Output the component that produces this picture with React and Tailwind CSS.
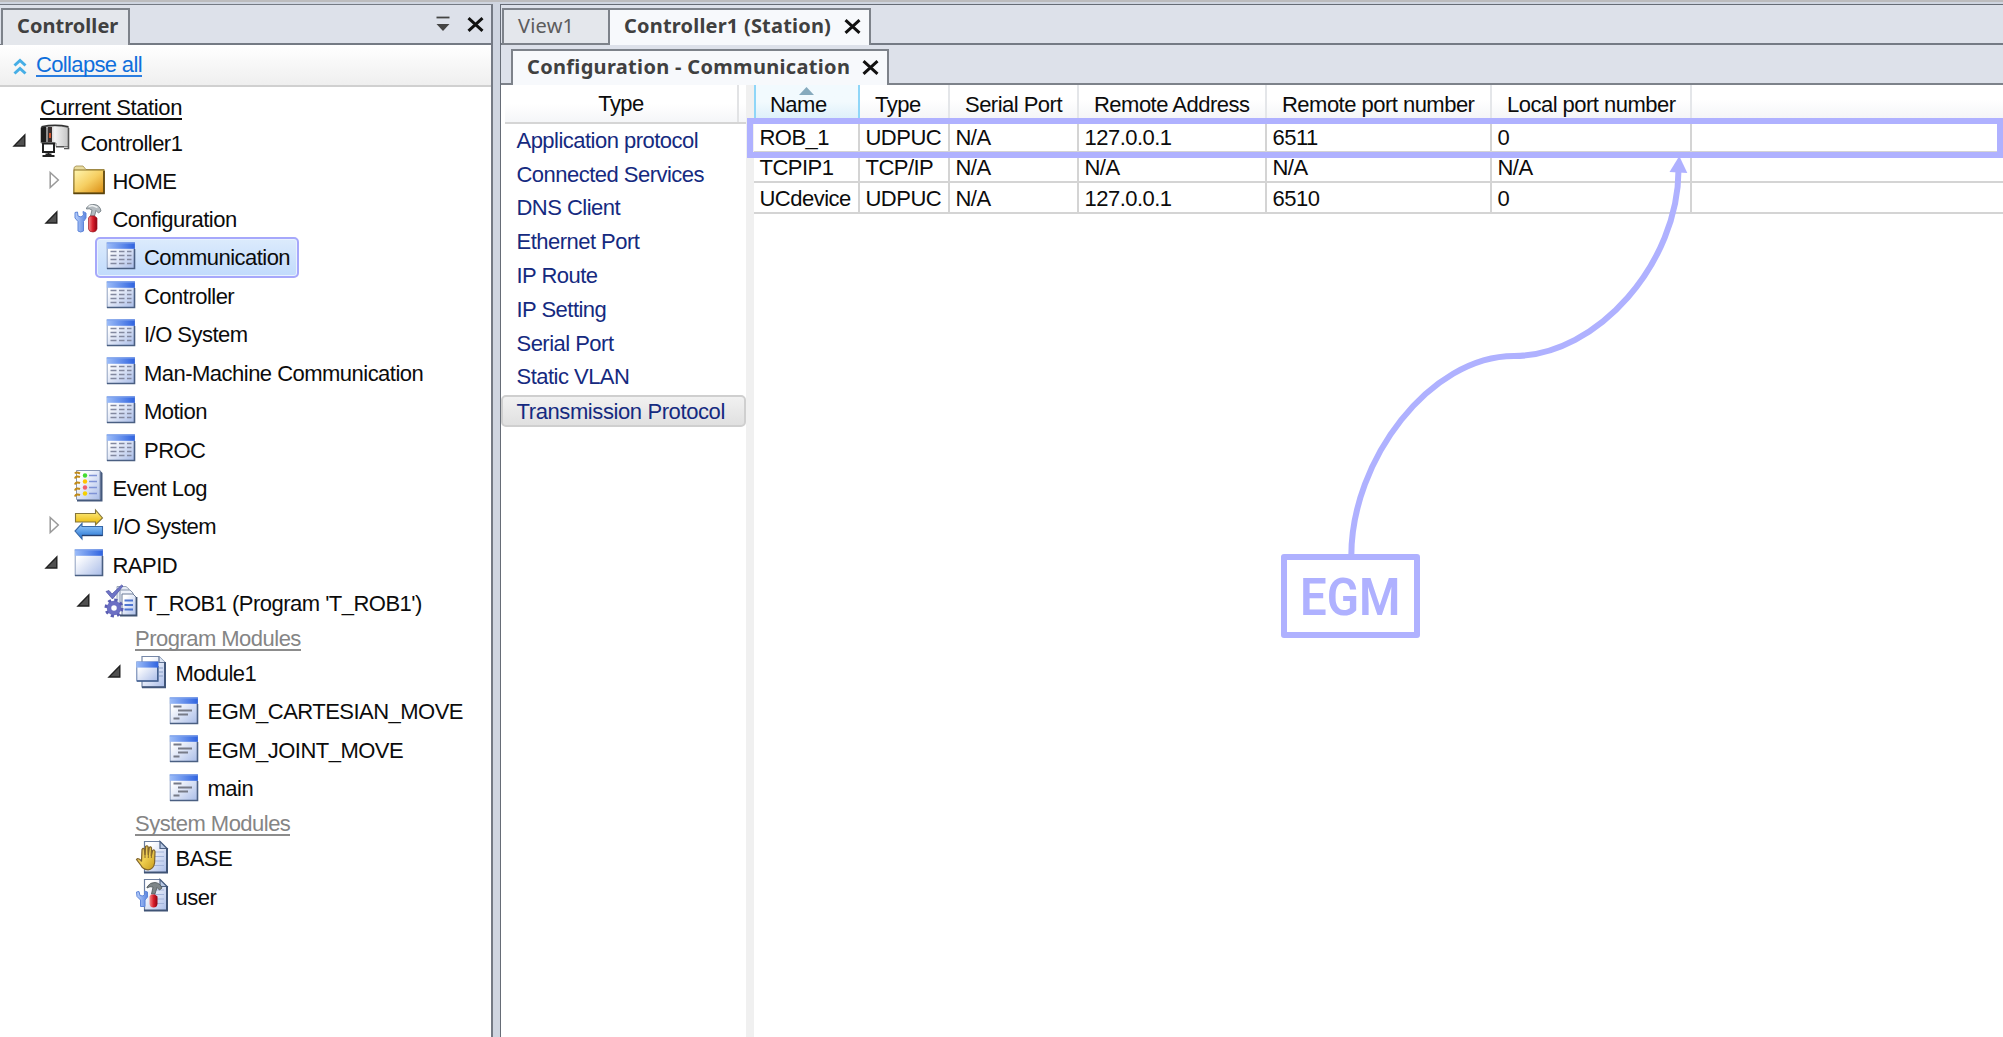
import React from "react";

const Svg = ({ children }) => (
  <svg width="32" height="32" viewBox="0 0 32 32" className="shrink-0 overflow-visible">
    {children}
  </svg>
);

const Defs = () => (
  <svg width="0" height="0" className="absolute">
    <defs>
      <linearGradient id="bar" x1="0" x2="1"><stop offset="0" stopColor="#9dbdf8" /><stop offset="1" stopColor="#2f63e0" /></linearGradient>
      <linearGradient id="pane" x1="0" y1="0" x2="1" y2="1"><stop offset="0.2" stopColor="#ffffff" /><stop offset="1" stopColor="#a9bce8" /></linearGradient>
      <linearGradient id="folder" x1="0" y1="0" x2="1" y2="1"><stop offset="0" stopColor="#fff6b0" /><stop offset="0.5" stopColor="#f6cf62" /><stop offset="1" stopColor="#d98a10" /></linearGradient>
      <linearGradient id="steel" x1="0" x2="1"><stop offset="0" stopColor="#777" /><stop offset="0.5" stopColor="#f4f4f4" /><stop offset="1" stopColor="#c4c4c4" /></linearGradient>
      <linearGradient id="gold" x1="0" y1="0" x2="0" y2="1"><stop offset="0" stopColor="#fff08a" /><stop offset="1" stopColor="#e8b400" /></linearGradient>
      <linearGradient id="hand" x1="0" y1="0" x2="1" y2="1"><stop offset="0" stopColor="#d9b96a" /><stop offset="0.5" stopColor="#f0cf50" /><stop offset="1" stopColor="#c79a18" /></linearGradient>
      <linearGradient id="azure" x1="0" y1="0" x2="0" y2="1"><stop offset="0" stopColor="#9fd0ff" /><stop offset="1" stopColor="#1f6fd0" /></linearGradient>
      <linearGradient id="red" x1="0" x2="1"><stop offset="0" stopColor="#f58a8a" /><stop offset="0.5" stopColor="#d8202c" /><stop offset="1" stopColor="#900010" /></linearGradient>
      <linearGradient id="wrench" x1="0" x2="1"><stop offset="0" stopColor="#b9d0fb" /><stop offset="1" stopColor="#5c86e0" /></linearGradient>
    </defs>
  </svg>
);

const Frame = () => (
  <>
    <rect x="3.2" y="1" width="27.3" height="25.5" fill="url(#pane)" stroke="#8fa0bf" />
    <path d="M30.5 7V26.5H3" fill="none" stroke="#4a5f82" strokeWidth="1.6" />
    <rect x="2.8" y="0.4" width="28" height="6.4" fill="url(#bar)" />
    <path d="M2.8 1H30.8" stroke="#7fa2ee" />
  </>
);

const TableIcon = () => (
  <Svg>
    <Frame />
    {[9.5, 13.5, 17.5, 21.5].map((y) => (
      <path key={y} d={`M6.5 ${y}h6M15 ${y}h5.5M23 ${y}h4.5`} stroke="#8389a0" strokeWidth="1.5" />
    ))}
  </Svg>
);
const WindowIcon = () => (<Svg><Frame /></Svg>);
const RoutineIcon = () => (
  <Svg>
    <g transform="translate(0 1)">
      <Frame />
      <path d="M6.5 9.500h8M11 13.500h14M11 17.500h10M6.500 21.500h6" stroke="#777b88" strokeWidth="1.900" />
    </g>
  </Svg>
);
const ControllerIcon = () => (
  <Svg>
    <path d="M1 0.500Q15-3 28.500 0.500V19.500H16V16H1Z" fill="url(#steel)" stroke="#666" strokeWidth="0.800" />
    <path d="M1 0.500L6 -0.500V15H1Z" fill="#1c1c1c" />
    <path d="M7 1V15" stroke="#909090" strokeWidth="2" />
    <path d="M10 0V15" stroke="#3a3030" strokeWidth="4" />
    <path d="M10 6v5" stroke="#e0582c" strokeWidth="1.800" />
    <path d="M1.500 -0.300Q15-3.200 28.500 -0.300" stroke="#333" strokeWidth="1.600" fill="none" />
    <path d="M16 19.800H24M24 21.500H28.500V1" stroke="#555" strokeWidth="1.600" fill="none" />
    <rect x="3" y="16.500" width="11" height="8.500" fill="#fff" stroke="#222" strokeWidth="2" />
    <path d="M8.500 25v3M2.500 29H14.500M5.500 27.500h6" stroke="#222" strokeWidth="1.800" />
  </Svg>
);
const FolderIcon = () => (
  <Svg>
    <path d="M2 4V1.500L4 0H11L14 3.500H32V27.500H1.500Z" fill="#e9dca0" stroke="#a08a4a" strokeWidth="0.800" />
    <rect x="2" y="4" width="30" height="23.200" fill="url(#folder)" stroke="#8d7426" />
    <path d="M32 5V27.400H1.500" fill="none" stroke="#5a430c" strokeWidth="1.600" />
  </Svg>
);
const ToolsIcon = () => (
  <Svg>
    <path d="M14.500 4Q17 0 22 0.500Q28 1 29 7L26.500 9L24 6.500L22.500 12H18.500L20 6Q17 4 14.500 5Z" fill="#b4bbc0" stroke="#768086" strokeWidth="0.900" />
    <path d="M16.500 2.500l4-1 5 2" stroke="#eef1f2" strokeWidth="1.400" fill="none" />
    <path d="M3 8.500L5.500 8L6 12L9 13L11.500 11L11 7.500L14 9V14L11.500 17.500V27Q8.500 29 6 27V17.500L3 14Z" fill="url(#wrench)" stroke="#5f86da" />
    <path d="M18 12H22.500L25 14V25Q24 28 21 28Q17 28 16.500 25V14Z" fill="url(#red)" stroke="#9b1822" strokeWidth="0.700" />
  </Svg>
);
const LogIcon = () => (
  <Svg>
    <path d="M5 -1.500H28L30.500 1V29.500H5Z" fill="#44597c" />
    <path d="M4.500 -1.500H28V27.500H4.500Z" fill="url(#pane)" stroke="#8796b4" />
    {[[3.5, "#42dc30"], [9.5, "#ffc400"], [15.5, "#f0606c"], [21.5, "#f5d000"]].map(([y, c]) => (
      <g key={y}>
        <circle cx="13" cy={y} r="2.200" fill={c} />
        <path d={`M17 ${y}h8`} stroke="#7f93d6" strokeWidth="1.500" />
        <path d={`M3 ${y + 3}q1-3 5-1.500`} stroke="#c08a18" strokeWidth="2.200" fill="none" />
      </g>
    ))}
    <path d="M3 1.500q1-2 5 0" stroke="#c08a18" strokeWidth="2" fill="none" />
  </Svg>
);
const SwapIcon = () => (
  <Svg>
    <path d="M3.500 2.500H23.500V-1L30.500 7L23.500 14V11H3.500Z" fill="url(#gold)" stroke="#85763a" strokeWidth="1.100" />
    <path d="M30.500 15.500H10V12.500L3 20L10 28V24.500H30.500Z" fill="url(#azure)" stroke="#3768a8" strokeWidth="1.100" />
    <path d="M10 24.500H30.500" stroke="#243f70" strokeWidth="1.400" />
  </Svg>
);
const ProgramIcon = () => (
  <Svg>
    <path d="M13 -0.500H22L25 2V18H13Z" fill="#e6ebf5" stroke="#9aa6ba" />
    <path d="M16 3H26L29 6V22H16Z" fill="#eef2fa" stroke="#8694ac" />
    <path d="M18 7H29L32.500 10.500V28.500H18Z" fill="url(#pane)" stroke="#6c7c98" />
    <path d="M32.500 10V28.500H16" fill="none" stroke="#3f5270" strokeWidth="1.800" />
    <path d="M20.500 13.500h8.500M20.500 18h8.500M20.500 22.500h8.500" stroke="#4d74d0" strokeWidth="2" />
    <path d="M2 4.500L5 3.500L8 7L17.500 -2L19 -1L8.500 12Z" fill="#6e74c6" stroke="#4c50a4" strokeWidth="0.700" />
    <circle cx="10" cy="21" r="5" fill="#fff" stroke="#6c6fc4" strokeWidth="4.500" />
    <circle cx="10" cy="21" r="8.100" fill="none" stroke="#5a5db2" strokeWidth="2.800" strokeDasharray="3.180 3.180" />
  </Svg>
);
const ModuleIcon = () => (
  <Svg>
    <path d="M7 -1.500H24L30 4.500V29H7Z" fill="url(#pane)" stroke="#7688a8" strokeWidth="1.200" />
    <path d="M24 -1.500V4.500H30" fill="#dfe7f6" stroke="#5f7294" strokeWidth="1.200" />
    <path d="M30 4V29.300H7" stroke="#41567a" strokeWidth="2" fill="none" />
    <path d="M24 10h4M24 14h4M24 18h4" stroke="#8ba0c8" />
    <rect x="1.800" y="4" width="21" height="19" fill="url(#pane)" stroke="#6079aa" />
    <path d="M22.800 8V23H2" fill="none" stroke="#43608f" strokeWidth="1.600" />
    <rect x="1.300" y="3.600" width="22" height="6" fill="url(#bar)" />
  </Svg>
);
const Page = () => (
  <>
    <path d="M9.500 -1.500H25L32 5.500V29.500H9.500Z" fill="url(#pane)" stroke="#6c7e9e" strokeWidth="1.200" />
    <path d="M25 -1.500V5.500H32Z" fill="#b8c8e4" stroke="#4f6384" strokeWidth="1.200" />
    <path d="M32 5V29.500H9" stroke="#3f5375" strokeWidth="2" fill="none" />
    <path d="M19 9h10M19 13.500h10M19 18h10M19 22.500h10" stroke="#a3b4da" strokeWidth="1.200" />
  </>
);
const HandIcon = () => (
  <Svg>
    <Page />
    <path
      d="M1.500 16.500Q3 14.500 6 17.500L6.500 18.500L7 6.500Q8 4.500 9.300 6L10 12L10.600 3.500Q12 2 13 3.500L13.300 12L14.300 4.500Q15.800 3 16.500 5L16.300 13L17.600 7.500Q19.500 6 20 8.500L19.600 20Q18.500 26.500 13 26.800Q8 26.500 6 22.500Z"
      fill="url(#hand)" stroke="#80642a" strokeWidth="1.200"
    />
    <path d="M10 7v8M13.300 6v9M16.400 8v7" stroke="#8a6c2c" strokeWidth="1" />
  </Svg>
);
const UserIcon = () => (
  <Svg>
    <Page />
    <path d="M12 6Q15 1 20 1.500Q25 2 27 7L24.500 9L22 6.500L20 13H16.500L18 6Q15 5 12 7Z" fill="#7d8588" stroke="#4c5558" strokeWidth="0.800" />
    <path d="M1.500 11L4 10.500L5 14.500L8 15L10 13L9.500 10L12.500 11V16L10 19V25.500H5.500V19L2 15.500Z" fill="url(#wrench)" stroke="#5f86da" />
    <path d="M16 13.500H20L22.500 15.500V23Q22 26.500 18.500 26.500Q15 26.500 14.500 23V15.500Z" fill="url(#red)" />
  </Svg>
);

const Arrow = ({ state }) => (
  <span className="flex h-8 w-[30px] shrink-0">
    {state === "open" && <Svg><path d="M14.800 8V19H4Z" fill="#505050" stroke="#222" strokeWidth="1.400" /></Svg>}
    {state === "closed" && <Svg><path d="M8.200 6.500L16.300 14L8.200 21.500Z" fill="#fff" stroke="#9a9a9a" strokeWidth="1.500" /></Svg>}
  </span>
);

const PAD = ["pl-[10px]", "pl-[42px]", "pl-[73.500px]", "pl-[105px]", "pl-[137px]"];
const TREE = [
  [0, "open", ControllerIcon, "Controller1"],
  [1, "closed", FolderIcon, "HOME"],
  [1, "open", ToolsIcon, "Configuration"],
  [2, "", TableIcon, "Communication", true],
  [2, "", TableIcon, "Controller"],
  [2, "", TableIcon, "I/O System"],
  [2, "", TableIcon, "Man-Machine Communication"],
  [2, "", TableIcon, "Motion"],
  [2, "", TableIcon, "PROC"],
  [1, "", LogIcon, "Event Log"],
  [1, "closed", SwapIcon, "I/O System"],
  [1, "open", WindowIcon, "RAPID"],
  [2, "open", ProgramIcon, "T_ROB1 (Program 'T_ROB1')"],
  "Program Modules",
  [3, "open", ModuleIcon, "Module1"],
  [4, "", RoutineIcon, "EGM_CARTESIAN_MOVE"],
  [4, "", RoutineIcon, "EGM_JOINT_MOVE"],
  [4, "", RoutineIcon, "main"],
  "System Modules",
  [3, "", HandIcon, "BASE"],
  [3, "", UserIcon, "user"],
];

const TreeRow = ({ row }) => {
  if (typeof row === "string")
    return (
      <div className="flex h-[31.700px] items-center pl-[135px] pt-[2px] text-[#858585]">
        <span className="border-b-2 border-[#8c8c8c] leading-[20px]">{row}</span>
      </div>
    );
  const [level, state, Icon, label, selected] = row;
  return (
    <div className={`flex h-[38.360px] items-center ${PAD[level]}`}>
      <Arrow state={state} />
      {selected ? (
        <div className="-ml-[9px] -mt-[2px] flex h-[41px] w-[204px] shrink-0 items-center rounded-[5px] border-2 border-[#a6a8fb] bg-gradient-to-b from-[#dcebfc] to-[#c1dbfc] pl-[7px] pt-[2px] ring-1 ring-inset ring-[#e8f2fe]">
          <Icon />
          <span className="pl-[8.500px]">{label}</span>
        </div>
      ) : (
        <>
          <Icon />
          <span className="pl-[8.500px] pt-px">{label}</span>
        </>
      )}
    </div>
  );
};

const Close = () => (
  <svg width="17" height="15" viewBox="0 0 17 15" className="mt-px shrink-0">
    <path d="M1.500 1.200L15.500 13.800M15.500 1.200L1.500 13.800" stroke="#111" strokeWidth="3" />
  </svg>
);

const TYPES = ["Application protocol", "Connected Services", "DNS Client", "Ethernet Port", "IP Route", "IP Setting", "Serial Port", "Static VLAN", "Transmission Protocol"];
const COLS = "grid grid-cols-[106px_90px_129px_188px_225px_200px_1fr]";
const HEAD = ["Name", "Type", "Serial Port", "Remote Address", "Remote port number", "Local port number", ""];
const ROWS = [
  ["ROB_1", "UDPUC", "N/A", "127.0.0.1", "6511", "0", ""],
  ["TCPIP1", "TCP/IP", "N/A", "N/A", "N/A", "N/A", ""],
  ["UCdevice", "UDPUC", "N/A", "127.0.0.1", "6510", "0", ""],
];

const ControllerPanel = () => (
  <aside className="flex w-[493px] shrink-0 flex-col border-r-2 border-[#747a84] bg-white">
    <div className="flex h-[40px] shrink-0 items-end bg-[#dde1ea]">
      <div className="h-full w-[1px] border-b border-[#747a84]" />
      <div className="mt-[3px] flex h-[37px] w-[129px] items-center border-x-2 border-t-2 border-[#7d828a] bg-[#e4e7ec] pb-[3px] pl-[14px] font-['Noto_Sans'] text-[20px] font-bold tracking-[0.050px] text-[#404040]">
        Controller
      </div>
      <div className="flex h-full flex-1 items-center justify-end gap-[17px] border-b-2 border-[#747a84] pr-[7px]">
        <svg width="14" height="16" viewBox="0 0 14 16"><path d="M0.500 1.500H13.500" stroke="#444" strokeWidth="1.800" /><path d="M0.500 8H13.500L7 15Z" fill="#444" /></svg>
        <Close />
      </div>
    </div>
    <div className="flex h-[42px] shrink-0 items-center border-b-2 border-[#d0d0d0] bg-gradient-to-b from-white to-[#efefef] pl-[13px]">
      <svg width="14" height="18" viewBox="0 0 14 18" className="mt-[3px]">
        <path d="M1.500 7.500L7 2.500L12.500 7.500M1.500 15.500L7 10.500L12.500 15.500" fill="none" stroke="#45aee6" strokeWidth="3" />
      </svg>
      <span className="ml-[9px] mt-[2px] border-b-2 border-[#2a7de0] leading-[20px] tracking-[-0.650px] text-[#0f6fdc]">Collapse all</span>
    </div>
    <div className="flex h-[37px] shrink-0 items-center pl-[40px] pt-[6px]">
      <span className="border-b-2 border-[#111] leading-[20px] tracking-[-0.400px]">Current Station</span>
    </div>
    {TREE.map((row, i) => <TreeRow key={i} row={row} />)}
  </aside>
);

const TypeList = () => (
  <section className="flex w-[245px] shrink-0 flex-col bg-white">
    <div className="ml-[4px] flex h-[39px] items-center justify-center border-b-2 border-[#d5d5d5] bg-gradient-to-b from-white from-50% to-[#f5f6f8]">
      <div className="flex h-full w-[234px] items-center justify-center border-r-2 border-[#e2e3e5]">Type</div>
      <div className="w-[7px]" />
    </div>
    <div className="flex flex-col text-[#152a80]">
      {TYPES.map((t, i) => (
        <div key={t} className={`flex h-[33.800px] items-center ${i === 8 ? "" : "pl-[15.500px]"}`}>
          {i === 8 ? (
            <div className="flex h-[32px] w-full items-center rounded-[5px] border-2 border-[#cfcfcf] bg-gradient-to-b from-[#f1f1f1] to-[#e0e0e0] pl-[13.500px] pt-px tracking-[-0.400px]">{t}</div>
          ) : t}
        </div>
      ))}
    </div>
  </section>
);

const DataTable = () => (
  <section className="flex-1 bg-white">
    <div className={`${COLS} h-[37.300px]`}>
      {HEAD.map((h, i) => (
        <div
          key={i}
          className={`flex items-center pt-[3px] ${i === 0 ? "relative border-x-2 border-[#8fd6f8] bg-gradient-to-b from-[#f2fafe] from-45% to-[#d9eef9] pl-[14px]" : i === 6 ? "bg-gradient-to-b from-white from-40% to-[#f2f3f6]" : "border-r-2 border-[#e4e6e9] bg-gradient-to-b from-white from-40% to-[#f2f3f6] pl-[15px]"}`}
        >
          {i === 0 && (
            <svg width="15" height="8" viewBox="0 0 15 8" className="absolute left-[43px] top-[2px]"><path d="M7.500 0L15 8H0Z" fill="#86aabd" /></svg>
          )}
          {h}
        </div>
      ))}
    </div>
    {ROWS.map((r, i) => (
      <div key={i} className={`${COLS} h-[30.500px] border-b-2 border-[#d4d4d4]`}>
        {r.map((c, j) => (
          <div key={j} className={`flex items-center pl-[5.500px] pt-[2px] ${j < 6 ? "border-r-2 border-[#d4d4d4]" : ""}`}>{c}</div>
        ))}
      </div>
    ))}
  </section>
);

const Annotation = () => (
  <>
    <div className="pointer-events-none absolute left-[747px] top-[118px] h-[40px] w-[1256px] border-[6px] border-[#afb1ff]" />
    <svg width="2003" height="1037" viewBox="0 0 2003 1037" className="pointer-events-none absolute left-0 top-0">
      <path d="M1351.300 556C1351.300 460 1430 356 1514 356C1598 356 1678.500 262 1678.500 170" fill="none" stroke="#afb1ff" strokeWidth="6" />
      <path d="M1679.300 156L1687.300 173L1669.500 172Z" fill="#afb1ff" />
    </svg>
    <div className="absolute left-[1281px] top-[554px] flex h-[84px] w-[139px] items-center justify-center rounded-[3px] border-[6px] border-[#afb1ff] pt-[3px] text-[#afb1ff]">
      <span className="origin-center scale-x-[0.910] font-[Roboto] text-[52px] font-semibold leading-none tracking-normal">EGM</span>
    </div>
  </>
);

export default function App() {
  return (
    <div className="relative flex h-[1037px] w-[2003px] flex-col overflow-hidden bg-[#cfd5e0] font-['Liberation_Sans',sans-serif] text-[22px] leading-[24px] tracking-[-0.520px] whitespace-nowrap text-[#0c0c0c]">
      <Defs />
      <div className="h-[2px] shrink-0 bg-[#bcbcbe]" />
      <div className="h-[2px] shrink-0" />
      <div className="flex min-h-0 flex-1">
        <div className="flex border-t border-[#747a84]"><ControllerPanel /></div>
        <div className="w-[7px] shrink-0" />
        <main className="flex flex-1 flex-col border-l border-t border-[#666c76] bg-[#dde1ea]">
          <div className="flex h-[40px] shrink-0 items-end font-['Noto_Sans'] text-[20px] tracking-[0.200px]">
            <div className="h-full w-[1px] border-b-2 border-[#747a84]" />
            <div className="flex h-[37px] w-[106px] items-center border-b-2 border-l-2 border-t-2 border-[#7d828a] bg-[#e4e7ec] pb-[2px] pl-[14px] text-[#5c5c5c]">View1</div>
            <div className="flex h-[37px] w-[263px] items-center justify-between border-x-2 border-t-2 border-[#7d828a] bg-[#f7f9fc] pb-[3px] pl-[14px] pr-[8px] font-bold text-[#404040]">
              <span>Controller1 (Station)</span><Close />
            </div>
            <div className="h-full flex-1 border-b-2 border-[#747a84]" />
          </div>
          <div className="flex h-[40px] shrink-0 items-end font-['Noto_Sans'] text-[20px] tracking-[0.320px]">
            <div className="h-full w-[10px] border-b-2 border-[#7d828a]" />
            <div className="flex h-[36px] w-[378px] items-center justify-between border-x-2 border-t-2 border-[#7d828a] bg-[#f7f9fc] pb-[3px] pl-[14px] pr-[8px] font-bold text-[#404040]">
              <span>Configuration - Communication</span><Close />
            </div>
            <div className="h-full flex-1 border-b-2 border-[#7d828a]" />
          </div>
          <div className="flex min-h-0 flex-1">
            <TypeList />
            <div className="w-[8px] shrink-0 bg-[#f0f0f0]" />
            <DataTable />
          </div>
        </main>
      </div>
      <Annotation />
    </div>
  );
}
